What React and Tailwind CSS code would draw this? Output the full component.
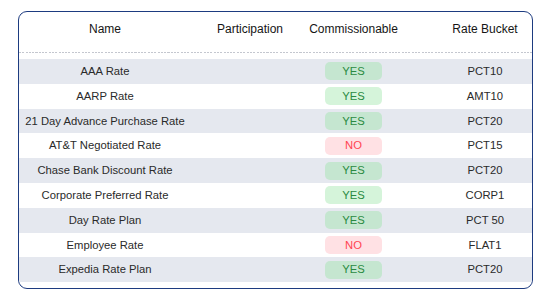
const rates = [
  { name: "AAA Rate", comm: true, bucket: "PCT10" },
  { name: "AARP Rate", comm: true, bucket: "AMT10" },
  { name: "21 Day Advance Purchase Rate", comm: true, bucket: "PCT20" },
  { name: "AT&T Negotiated Rate", comm: false, bucket: "PCT15" },
  { name: "Chase Bank Discount Rate", comm: true, bucket: "PCT20" },
  { name: "Corporate Preferred Rate", comm: true, bucket: "CORP1" },
  { name: "Day Rate Plan", comm: true, bucket: "PCT 50" },
  { name: "Employee Rate", comm: false, bucket: "FLAT1" },
  { name: "Expedia Rate Plan", comm: true, bucket: "PCT20" },
];

// fixed column widths so the centres line up with the screenshot
const cols = "grid grid-cols-[172px_118px_89px_133px]";

export default function App() {
  return (
    <div className="w-[550px] h-[300px] bg-white pt-[11px] pl-[18px] font-['Liberation_Sans',Arial,sans-serif] text-[#2a2a2a]">
      <div className="w-[515px] h-[278px] border border-[#1d3b80] rounded-[9px] overflow-hidden">
        {/* header */}
        <div className={`${cols} h-[40px] pb-[6px] items-center text-[12px] text-[#151515]`}>
          <div className="text-center">Name</div>
          <div className="text-center">Participation</div>
          <div className="text-center">Commissionable</div>
          <div className="text-center pl-[41px]">Rate Bucket</div>
        </div>
        <div className="h-px bg-[repeating-linear-gradient(90deg,#c4c7cf_0_2px,transparent_2px_3.3px)]" />

        {/* rows */}
        <div className="pt-[6px] text-[11.25px]">
          {rates.map((r, i) => (
            <div
              key={r.name}
              className={`${cols} h-[24.8px] items-center ${i % 2 === 0 ? "bg-[#e5e8ef]" : "bg-white"}`}
            >
              <div className="text-center">{r.name}</div>
              <div />
              <div className="flex justify-center">
                {r.comm ? (
                  <span className="w-[57px] h-[18px] rounded-[5px] bg-[rgba(150,228,162,0.4)] text-[#2a8a42] flex items-center justify-center">
                    YES
                  </span>
                ) : (
                  <span className="w-[57px] h-[18px] rounded-[5px] bg-[#ffe1e4] text-[#ff4452] flex items-center justify-center">
                    NO
                  </span>
                )}
              </div>
              <div className="text-center pl-[41px]">{r.bucket}</div>
            </div>
          ))}
        </div>
      </div>
    </div>
  );
}
